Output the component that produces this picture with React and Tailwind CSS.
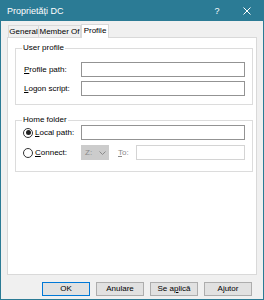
const font = { fontFamily: '"Liberation Sans", Arial, sans-serif' };

const Label = ({ u, rest, className = "" }) => (
  <span className={`whitespace-nowrap ${className}`}>
    <span className="underline">{u}</span>
    {rest}
  </span>
);

const Box = ({ w = "w-[164px]", light }) => (
  <div className={`${w} h-[15px] bg-white border ${light ? "border-[#d4d4d4]" : "border-[#939393]"}`} />
);

const Radio = ({ checked, u, rest }) => (
  <span className="flex items-center w-[58px] gap-[2px]">
    <span className="w-[10px] h-[10px] rounded-full border border-[#333] bg-white flex items-center justify-center">
      {checked && <span className="w-[5px] h-[5px] rounded-full bg-[#222]" />}
    </span>
    <Label u={u} rest={rest} />
  </span>
);

export default function App() {
  return (
    <div className="w-[264px] h-[300px] bg-[#2b7b95] flex flex-col text-[8px] leading-[10px] text-black" style={font}>
      {/* title bar */}
      <div className="h-[21px] flex items-center pl-[7px] text-white text-[9px]">
        <span className="flex-1">Proprietăți DC</span>
        <span className="w-[10px] text-center mr-[21px]">?</span>
        <svg width="8" height="8" viewBox="0 0 8 8" className="mr-[13px]">
          <path d="M0.5 0.5 L7.5 7.5 M7.5 0.5 L0.5 7.5" stroke="white" strokeWidth="1" />
        </svg>
      </div>

      {/* body */}
      <div className="flex-1 mx-px mb-px bg-[#f0f0f0] flex flex-col px-[6px] pt-[2px]">
        {/* tabs */}
        <div className="flex items-end h-[14px] pl-[1px] relative z-10">
          <div className="w-[31px] h-[12px] pt-px border border-b-0 border-[#d9d9d9] bg-[#f0f0f0] flex items-center justify-center">General</div>
          <div className="w-[42px] h-[12px] pt-px border border-b-0 border-l-0 border-[#d9d9d9] bg-[#f0f0f0] flex items-center justify-center">Member Of</div>
          <div className="w-[28px] h-[14px] -mb-px pb-[1px] border border-b-0 border-[#d9d9d9] bg-white flex items-center justify-center">Profile</div>
        </div>

        {/* panel */}
        <div className="h-[238px] border border-[#d9d9d9] bg-white px-[7px] pt-[5px] flex flex-col gap-[10px]">
          <fieldset className="border border-[#dcdcdc] px-[7px] h-[62px]">
            <legend className="px-[1px] -ml-[1px]">User profile</legend>
            <div className="flex flex-col gap-[4px] pt-[9px] pl-[1px]">
              <div className="flex items-center">
                <Label u="P" rest="rofile path:" className="w-[57px]" />
                <Box />
              </div>
              <div className="flex items-center">
                <Label u="L" rest="ogon script:" className="w-[57px]" />
                <Box />
              </div>
            </div>
          </fieldset>

          <fieldset className="border border-[#dcdcdc] px-[7px] h-[57px]">
            <legend className="px-[1px] -ml-[1px]">Home folder</legend>
            <div className="flex flex-col gap-[5px]">
              <div className="flex items-center">
                <Radio checked u="L" rest="ocal path:" />
                <Box />
              </div>
              <div className="flex items-center">
                <Radio u="C" rest="onnect:" />
                <div className="w-[28px] h-[15px] bg-[#cccccc] flex items-center justify-between pl-[4px] pr-[3px] text-[#8a8a8a]">
                  <span>Z:</span>
                  <svg width="7" height="4" viewBox="0 0 7 4">
                    <path d="M0.5 0.5 L3.5 3.5 L6.5 0.5" stroke="#8a8a8a" fill="none" />
                  </svg>
                </div>
                <Label u="T" rest="o:" className="w-[27px] pl-[9px] text-[#8a8a8a]" />
                <Box w="w-[109px]" light />
              </div>
            </div>
          </fieldset>
        </div>

        {/* buttons */}
        <div className="flex justify-end gap-[6px] mt-[7px] pr-[5px]">
          <button className="w-[48px] h-[14px] bg-[#e1e1e1] border border-[#0078d7] leading-[12px]">OK</button>
          <button className="w-[48px] h-[14px] bg-[#e1e1e1] border border-[#adadad] leading-[12px]">Anulare</button>
          <button className="w-[48px] h-[14px] bg-[#e1e1e1] border border-[#adadad] leading-[12px]">
            Se a<span className="underline">p</span>lică
          </button>
          <button className="w-[48px] h-[14px] bg-[#e1e1e1] border border-[#adadad] leading-[12px]">Ajutor</button>
        </div>
      </div>
    </div>
  );
}
